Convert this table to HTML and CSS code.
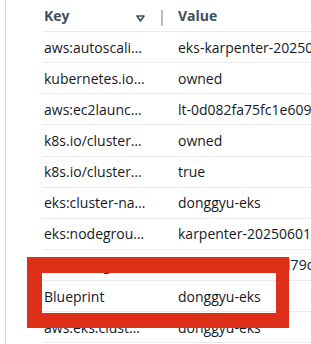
FILE: index.html
```html
<!DOCTYPE html>
<html>
<head>
<meta charset="utf-8">
<link rel="stylesheet" href="styles.css">
</head>
<body>
<div class="panel">
  <div class="table">
    <div class="row head">
      <div class="cell key">Key<span class="sort"><svg width="9" height="7" viewBox="0 0 9 7"><path d="M1 1 H8 L4.5 6 Z" fill="none" stroke="#414d5c" stroke-width="1.6" stroke-linejoin="round"/></svg></span><span class="divider"></span></div>
      <div class="cell val">Value</div>
    </div>
    <div class="row"><div class="cell key"><span class="trunc" title="aws:autoscaling:groupName">aws:autoscali…</span></div><div class="cell val">eks-karpenter-20250601</div></div>
    <div class="row"><div class="cell key"><span class="trunc" title="kubernetes.io/cluster/donggyu-eks">kubernetes.io…</span></div><div class="cell val">owned</div></div>
    <div class="row"><div class="cell key"><span class="trunc" title="aws:ec2launchtemplate:id">aws:ec2launc…</span></div><div class="cell val">lt-0d082fa75fc1e6096</div></div>
    <div class="row"><div class="cell key"><span class="trunc" title="k8s.io/cluster-autoscaler/donggyu-eks">k8s.io/cluster…</span></div><div class="cell val">owned</div></div>
    <div class="row"><div class="cell key"><span class="trunc" title="k8s.io/cluster-autoscaler/enabled">k8s.io/cluster…</span></div><div class="cell val">true</div></div>
    <div class="row"><div class="cell key"><span class="trunc" title="eks:cluster-name">eks:cluster-na…</span></div><div class="cell val">donggyu-eks</div></div>
    <div class="row"><div class="cell key"><span class="trunc" title="eks:nodegroup-name">eks:nodegrou…</span></div><div class="cell val">karpenter-20250601</div></div>
    <div class="row"><div class="cell key"><span class="trunc">eks:nodegrou…</span></div><div class="cell val">0ec8a3b2-4f1ei-d79d</div></div>
    <div class="row"><div class="cell key"><span class="trunc">Blueprint</span></div><div class="cell val">donggyu-eks</div></div>
    <div class="row"><div class="cell key"><span class="trunc" title="aws:eks:cluster-name">aws:eks:clust…</span></div><div class="cell val">donggyu-eks</div></div>
  </div>
  <div class="highlight"></div>
</div>
</body>
</html>
```
FILE: styles.css
```css
html, body {
  margin: 0;
  padding: 0;
  width: 311px;
  height: 344px;
  overflow: hidden;
  background: #ffffff;
}
body {
  font-family: "Open Sans", "Noto Sans", sans-serif;
  font-size: 14px;
  color: #16191f;
}
.panel {
  position: relative;
  margin-left: 5px;
  height: 344px;
  border-left: 1px solid #d5d9dd;
  padding-left: 36px;
  overflow: hidden;
}
.table {
  display: flex;
  flex-direction: column;
}
.row {
  display: grid;
  grid-template-columns: 128px 1fr;
  height: 30.125px;
  border-bottom: 1px solid #e9ebed;
  align-items: center;
  white-space: nowrap;
}
.row.head {
  height: 31px;
  font-weight: 700;
  color: #414d5c;
}
.cell {
  min-width: 0;
}
.key {
  padding-left: 2px;
  display: flex;
  align-items: center;
  position: relative;
  height: 100%;
}
.trunc {
  display: block;
  width: 110px;
  overflow: hidden;
}
.val {
  padding-left: 8px;
  overflow: hidden;
}
.sort {
  position: absolute;
  left: 94px;
  top: 15px;
  display: flex;
}
.divider {
  position: absolute;
  left: 119px;
  top: 10px;
  width: 2px;
  height: 16px;
  background: #b6bec9;
}
.highlight {
  position: absolute;
  left: 21px;
  top: 257px;
  width: 234px;
  height: 40px;
  border-style: solid;
  border-color: #de3019;
  border-width: 16px 13px 15px 15px;
}
```
